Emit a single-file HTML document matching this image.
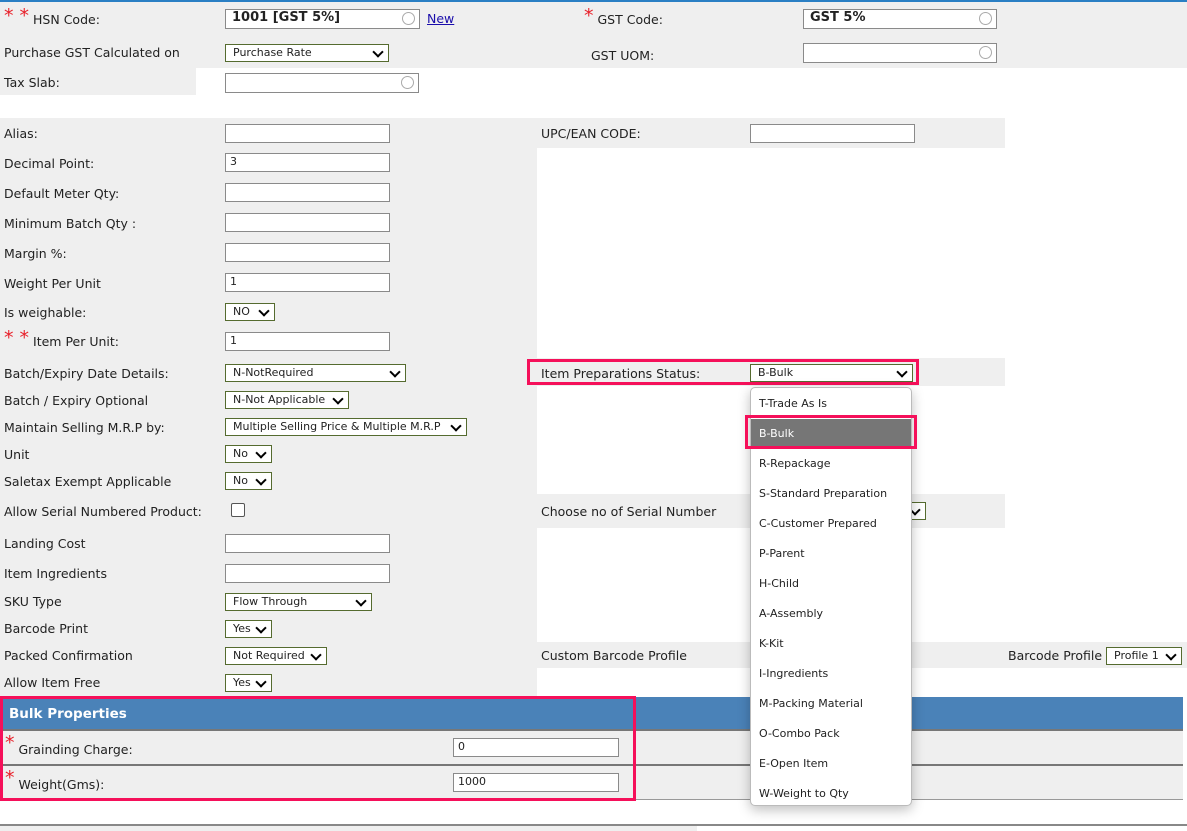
<!DOCTYPE html><html><head><style>
body{margin:0;width:1187px;height:831px;position:relative;background:#fff;font-family:"DejaVu Sans",Verdana,sans-serif;font-size:12.5px;color:#222;overflow:hidden}
.a{position:absolute}
.g{position:absolute;background:#efefef}
.l{position:absolute;white-space:nowrap;line-height:16px;transform:translateY(1px)}
.i{position:absolute;background:#fff;border:1px solid #8a8a8a;height:18px;box-sizing:border-box;width:165px;left:225px;font-size:11px;padding-left:4px;line-height:16px}
.s{position:absolute;background:#fff;border:1px solid #556b2f;height:18px;box-sizing:border-box;font-size:11px;padding-left:7px;line-height:16px;white-space:nowrap}
.s:after{content:"";position:absolute;right:6px;top:3px;width:6px;height:6px;border-right:2px solid #000;border-bottom:2px solid #000;transform:rotate(45deg)}
.st{color:#e8202a;font-size:19px}
.c{position:absolute;right:4px;top:2px;width:11px;height:11px;border:1.5px solid #aaa;border-radius:50%}
.d{position:absolute;left:759px;font-size:11px;white-space:nowrap}
</style></head><body>
<div class="a" style="left:0;top:0;width:1187px;height:2px;background:#2a7fc4"></div>
<div class="g" style="left:0;top:2px;width:1187px;height:66px"></div>
<div class="g" style="left:0;top:68px;width:196px;height:27px"></div>
<div class="g" style="left:0;top:118px;width:537px;height:578px"></div>
<div class="g" style="left:537px;top:118px;width:468px;height:30px"></div>
<div class="g" style="left:537px;top:358px;width:468px;height:28px"></div>
<div class="g" style="left:537px;top:494px;width:468px;height:34px"></div>
<div class="g" style="left:537px;top:642px;width:650px;height:26px"></div>

<div class="l" style="left:4px;top:7px"><span class="st">* *</span> <span style="position:relative;top:2px">HSN Code:</span></div>
<div class="i" style="left:225px;top:9px;width:195px;height:20px;font-weight:bold;font-size:13px;padding-left:6px">1001 [GST 5%]<span class="c"></span></div>
<div class="l" style="left:427px;top:10px;color:#1a0dab;text-decoration:underline">New</div>
<div class="l" style="left:584px;top:7px"><span class="st">*</span> <span style="position:relative;top:2px">GST Code:</span></div>
<div class="i" style="left:803px;top:9px;width:194px;height:20px;font-weight:bold;font-size:13px;padding-left:6px">GST 5%<span class="c"></span></div>
<div class="l" style="left:4px;top:44px">Purchase GST Calculated on</div>
<div class="s" style="left:225px;top:44px;width:164px">Purchase Rate</div>
<div class="l" style="left:591px;top:47px">GST UOM:</div>
<div class="i" style="left:803px;top:43px;width:194px;height:20px"><span class="c"></span></div>
<div class="l" style="left:4px;top:74px">Tax Slab:</div>
<div class="i" style="left:225px;top:73px;width:194px;height:20px"><span class="c"></span></div>

<div class="l" style="left:4px;top:125px">Alias:</div><div class="i" style="top:124px;height:19px"></div>
<div class="l" style="left:541px;top:125px">UPC/EAN CODE:</div><div class="i" style="left:750px;top:124px;height:19px"></div>
<div class="l" style="left:4px;top:155px">Decimal Point:</div><div class="i" style="top:153px;height:19px">3</div>
<div class="l" style="left:4px;top:185px">Default Meter Qty:</div><div class="i" style="top:183px;height:19px"></div>
<div class="l" style="left:4px;top:215px">Minimum Batch Qty :</div><div class="i" style="top:213px;height:19px"></div>
<div class="l" style="left:4px;top:245px">Margin %:</div><div class="i" style="top:243px;height:19px"></div>
<div class="l" style="left:4px;top:275px">Weight Per Unit</div><div class="i" style="top:273px;height:19px">1</div>
<div class="l" style="left:4px;top:304px">Is weighable:</div><div class="s" style="left:225px;top:303px;width:50px">NO</div>
<div class="l" style="left:4px;top:329px"><span class="st">* *</span> <span style="position:relative;top:2px">Item Per Unit:</span></div><div class="i" style="top:332px;height:19px">1</div>
<div class="l" style="left:4px;top:365px">Batch/Expiry Date Details:</div><div class="s" style="left:225px;top:364px;width:181px">N-NotRequired</div>
<div class="l" style="left:4px;top:392px">Batch / Expiry Optional</div><div class="s" style="left:225px;top:391px;width:124px">N-Not Applicable</div>
<div class="l" style="left:4px;top:419px">Maintain Selling M.R.P by:</div><div class="s" style="left:225px;top:418px;width:242px">Multiple Selling Price &amp; Multiple M.R.P</div>
<div class="l" style="left:4px;top:446px">Unit</div><div class="s" style="left:225px;top:445px;width:47px">No</div>
<div class="l" style="left:4px;top:473px">Saletax Exempt Applicable</div><div class="s" style="left:225px;top:472px;width:47px">No</div>
<div class="l" style="left:4px;top:503px">Allow Serial Numbered Product:</div><div class="a" style="left:231px;top:503px;width:12px;height:12px;border:1px solid #555;border-radius:2px;background:#fff"></div>
<div class="l" style="left:541px;top:503px">Choose no of Serial Number</div><div class="s" style="left:900px;top:502px;width:26px"></div>
<div class="l" style="left:4px;top:535px">Landing Cost</div><div class="i" style="top:534px;height:19px"></div>
<div class="l" style="left:4px;top:565px">Item Ingredients</div><div class="i" style="top:564px;height:19px"></div>
<div class="l" style="left:4px;top:593px">SKU Type</div><div class="s" style="left:225px;top:593px;width:147px">Flow Through</div>
<div class="l" style="left:4px;top:620px">Barcode Print</div><div class="s" style="left:225px;top:620px;width:47px">Yes</div>
<div class="l" style="left:4px;top:647px">Packed Confirmation</div><div class="s" style="left:225px;top:647px;width:102px">Not Required</div>
<div class="l" style="left:541px;top:647px">Custom Barcode Profile</div>
<div class="l" style="left:1008px;top:647px">Barcode Profile</div><div class="s" style="left:1106px;top:647px;width:76px">Profile 1</div>
<div class="l" style="left:4px;top:674px">Allow Item Free</div><div class="s" style="left:225px;top:674px;width:47px">Yes</div>

<div class="l" style="left:541px;top:365px">Item Preparations Status:</div>
<div class="s" style="left:750px;top:364px;width:163px;border-color:#556b2f">B-Bulk</div>
<div class="a" style="left:527px;top:359px;width:392px;height:26px;border:3px solid #f5105a;box-sizing:border-box"></div>

<div class="a" style="left:0;top:697px;width:1183px;height:32px;background:#4a82b8"></div>
<div class="l" style="left:9px;top:705px;color:#fff;font-weight:bold;font-size:13.5px">Bulk Properties</div>
<div class="a" style="left:0;top:729px;width:1183px;height:2px;background:#777"></div>
<div class="g" style="left:0;top:731px;width:1183px;height:33px"></div>
<div class="a" style="left:0;top:764px;width:1183px;height:2px;background:#777"></div>
<div class="g" style="left:0;top:766px;width:1183px;height:33px"></div>
<div class="a" style="left:0;top:799px;width:1183px;height:1px;background:#999"></div>
<div class="l" style="left:5px;top:734px"><span class="st">*</span> <span style="position:relative;top:5px">Grainding Charge:</span></div>
<div class="i" style="left:453px;top:738px;width:166px;height:19px">0</div>
<div class="l" style="left:5px;top:769px"><span class="st">*</span> <span style="position:relative;top:5px">Weight(Gms):</span></div>
<div class="i" style="left:453px;top:773px;width:166px;height:19px">1000</div>
<div class="a" style="left:0;top:696px;width:636px;height:105px;border:3px solid #f5105a;box-sizing:border-box"></div>
<div class="a" style="left:0;top:824px;width:1187px;height:2px;background:#888"></div>
<div class="g" style="left:0;top:826px;width:697px;height:5px"></div>

<div class="a" style="left:750px;top:387px;width:162px;height:419px;background:#fff;border:1px solid #bbb;border-radius:5px;box-sizing:border-box;box-shadow:0 4px 12px rgba(0,0,0,.25)"></div>
<div class="a" style="left:751px;top:419px;width:160px;height:27px;background:#767676"></div>
<div class="a" style="left:745px;top:415px;width:172px;height:34px;border:3px solid #f5105a;box-sizing:border-box"></div>
<div class="d" style="top:397px">T-Trade As Is</div>
<div class="d" style="top:427px;color:#fff">B-Bulk</div>
<div class="d" style="top:457px">R-Repackage</div>
<div class="d" style="top:487px">S-Standard Preparation</div>
<div class="d" style="top:517px">C-Customer Prepared</div>
<div class="d" style="top:547px">P-Parent</div>
<div class="d" style="top:577px">H-Child</div>
<div class="d" style="top:607px">A-Assembly</div>
<div class="d" style="top:637px">K-Kit</div>
<div class="d" style="top:667px">I-Ingredients</div>
<div class="d" style="top:697px">M-Packing Material</div>
<div class="d" style="top:727px">O-Combo Pack</div>
<div class="d" style="top:757px">E-Open Item</div>
<div class="d" style="top:787px">W-Weight to Qty</div>
</body></html>
